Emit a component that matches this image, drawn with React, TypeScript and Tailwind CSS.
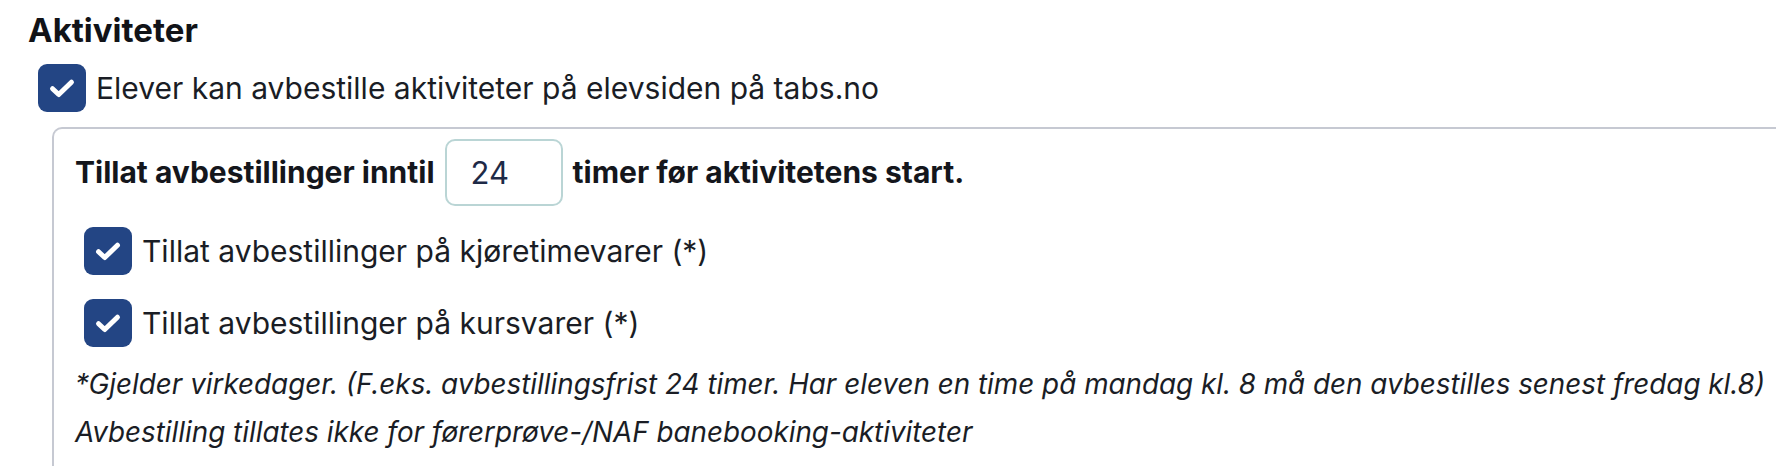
import { useState } from 'react'

interface CheckRowProps {
  label: string
  checked: boolean
  onToggle: () => void
  className?: string
}

function CheckRow({ label, checked, onToggle, className }: CheckRowProps) {
  return (
    <label className={`flex items-center gap-[10px] cursor-pointer ${className ?? ''}`}>
      <button
        type="button"
        onClick={onToggle}
        className={`flex h-[48px] w-[48px] shrink-0 items-center justify-center rounded-[9px] ${
          checked ? 'bg-[#234584]' : 'border-2 border-[#234584] bg-white'
        }`}
      >
        {checked && (
          <svg className="h-[28px] w-[28px]" viewBox="0 0 24 24" fill="none" stroke="white">
            <path d="M3.9 12.6l5.3 5L20.1 7.1" strokeWidth={4.3} strokeLinecap="round" strokeLinejoin="round" />
          </svg>
        )}
      </button>
      <span className="text-[30px] leading-[36px] text-[#1a1d25]">{label}</span>
    </label>
  )
}

export default function App() {
  const [enabled, setEnabled] = useState(true)
  const [driving, setDriving] = useState(true)
  const [courses, setCourses] = useState(true)
  const [hours, setHours] = useState('24')

  return (
    <div className="h-[466px] w-[1776px] overflow-hidden bg-white font-['Inter','Noto_Sans',sans-serif] text-[#1a1d25]">
      <div className="pl-[28px] pt-[10px]">
        <h2 className="text-[33px] leading-[40px] font-bold text-[#111318]">Aktiviteter</h2>

        <CheckRow
          className="mt-[14px] ml-[10px]"
          label="Elever kan avbestille aktiviteter på elevsiden på tabs.no"
          checked={enabled}
          onToggle={() => setEnabled(!enabled)}
        />

        {/* Settings panel, runs off the right edge */}
        <div className="mt-[15px] ml-[24px] w-[1780px] rounded-tl-[10px] border-l-2 border-t-2 border-[#c6c9d2] pl-[21px] pt-[10px] pb-[40px]">
          <div className="flex items-center gap-[10px] text-[30px] font-bold text-[#14161c]">
            <span>Tillat avbestillinger inntil</span>
            <input
              value={hours}
              onChange={(e) => setHours(e.target.value)}
              className="h-[67px] w-[118px] rounded-[10px] border-2 border-[#bad5d5] px-[24px] text-[31px] font-normal text-[#1e2a47] outline-none"
            />
            <span>timer før aktivitetens start.</span>
          </div>

          <CheckRow
            className="mt-[21px] ml-[9px]"
            label="Tillat avbestillinger på kjøretimevarer (*)"
            checked={driving}
            onToggle={() => setDriving(!driving)}
          />
          <CheckRow
            className="mt-[24px] ml-[9px]"
            label="Tillat avbestillinger på kursvarer (*)"
            checked={courses}
            onToggle={() => setCourses(!courses)}
          />

          <div className="mt-[13px] text-[27.8px] leading-[48px] italic text-[#1a1d25]">
            <p>
              *Gjelder virkedager. (F.eks. avbestillingsfrist 24 timer. Har eleven en time på mandag kl. 8 må den
              avbestilles senest fredag kl.8)
            </p>
            <p>Avbestilling tillates ikke for førerprøve-/NAF banebooking-aktiviteter</p>
          </div>
        </div>
      </div>
    </div>
  )
}
